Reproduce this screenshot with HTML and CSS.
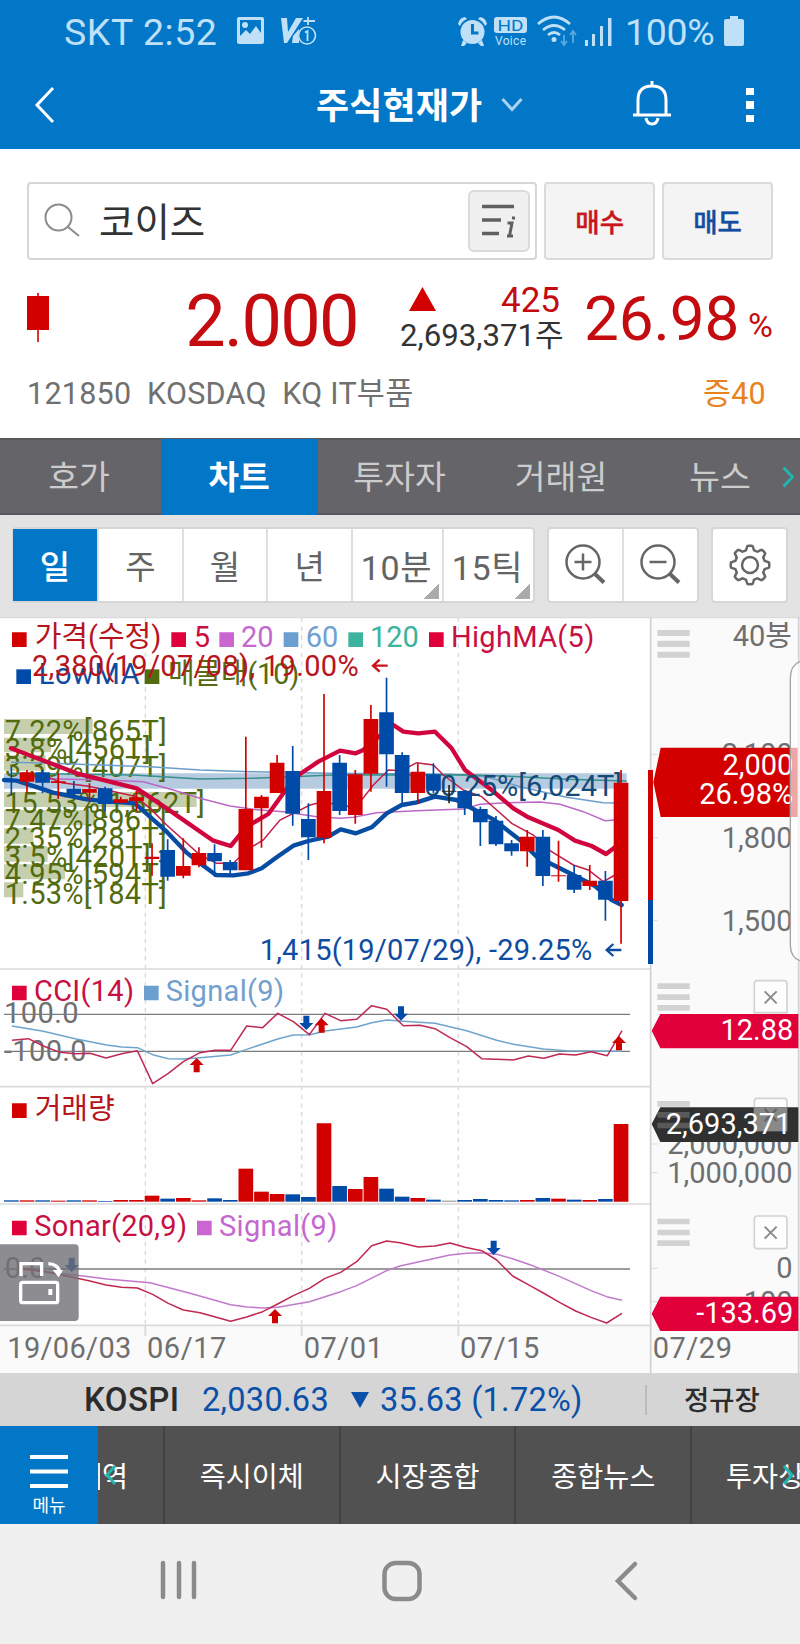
FILE: index.html
```html
<!DOCTYPE html>
<html lang="ko">
<head>
<meta charset="utf-8">
<title>주식현재가</title>
<link rel="stylesheet" href="styles.css">
</head>
<body>
<div class="status">
  <span class="carrier">SKT 2:52</span>
  <svg class="st-left" width="80" height="32" viewBox="0 0 80 32">
    <path fill-rule="evenodd" d="M3 2h23q2 0 2 2v23q0 2-2 2H3q-2 0-2-2V4q0-2 2-2zm1 3v16l6-6 4 4 6-8 5 7V5zM9 7a3 3 0 1 1 0 6 3 3 0 0 1 0-6z"/>
    <path d="M45 3h6l1 14 8-14h7L51 28h-3z"/><path d="M57 21l6-7v14h-7z"/>
    <circle cx="71" cy="20.500" r="8.500" fill="#0277c8" stroke="#bfe0f7" stroke-width="1.600"/>
    <path d="M69 17.500l2.500-1.500v10M72 2v8M67.500 6H79" fill="none" stroke="#bfe0f7" stroke-width="1.800"/>
  </svg>
  <svg class="st-right" width="158" height="32" viewBox="0 0 158 32">
    <circle cx="15.500" cy="17" r="12"/><path d="M1 9q1-6 7-7l2 2q-5 2-7 7zM30 9q-1-6-7-7l-2 2q5 2 7 7zM6 25l4 3-3 3H4zM25 25l-4 3 3 3h3z"/>
    <path d="M15.500 9v9h6" fill="none" stroke="#0277c8" stroke-width="3"/>
    <rect x="37" y="2" width="33" height="16" rx="3"/>
    <text x="40.500" y="15.500" font-size="15" fill="#0277c8" textLength="26" lengthAdjust="spacingAndGlyphs">HD</text>
    <text x="38" y="29.500" font-size="12" textLength="31">Voice</text>
    <g fill="none" stroke="#bfe0f7" stroke-width="2.800"><path d="M81 9q16-14 32 0M86 15q11-9 22 0M91 20q6-5 12 0"/></g>
    <circle cx="97" cy="24.500" r="2.500"/>
    <path d="M107 20v9m-3-3 3 4 3-4M116 28V17m-3 3 3-4 3 4" fill="none" stroke="#5ba9df" stroke-width="1.800"/>
    <path d="M128 25h3v6h-3zM135 19h3v12h-3zM143 11h3v20h-3zM151 3h3.500v28H151z"/>
  </svg>
  <span class="pct">100%</span>
  <svg width="20" height="32" viewBox="0 0 20 32"><path d="M6 1h8v3h4q2 0 2 2v23q0 2-2 2H2q-2 0-2-2V6q0-2 2-2h4z"/></svg>
</div>
<header class="bar">
  <svg class="back" width="22" height="38" viewBox="0 0 22 38"><path d="M19 2 3 19l16 17"/></svg>
  <h1>주식현재가</h1>
  <svg class="drop" width="22" height="16" viewBox="0 0 22 16"><path d="M1.500 2 11 12.500 20.500 2"/></svg>
  <svg class="bell" width="40" height="46" viewBox="0 0 40 46"><path d="M20 1v5M1 35h38M6 35V20Q6 6 20 6t14 14v15M14 38q1 6 6 6t6-6"/></svg>
  <div class="dots"><i></i><i></i><i></i></div>
</header>
<section class="quote">
  <div class="search-row">
    <div class="search">
      <svg width="36" height="36" viewBox="0 0 36 36"><circle cx="14.500" cy="14.500" r="13"/><path d="m24 24 11 9"/></svg>
      <span class="name">코이즈</span>
      <div class="list-btn"><svg width="36" height="34" viewBox="0 0 36 34"><path d="M1 2.500h32M1 16h19M1 29.500h17" stroke="#606060" stroke-width="3.500"/><path d="M26.500 19H31l-2.500 13M26 32h6M32.700 12.500l-.4 3" fill="none" stroke="#606060" stroke-width="3"/></svg></div>
    </div>
    <div class="trade buy">매수</div>
    <div class="trade sell">매도</div>
  </div>
  <div class="price-row">
    <svg class="mini" width="22" height="50" viewBox="0 0 22 50"><path d="M0 3h22v34H0zM10.200 0h1.600v49h-1.600z" fill="#d30000"/></svg>
    <span class="price">2.000</span>
    <div class="change"><div class="chg-top"><svg width="27" height="24" viewBox="0 0 27 24"><path d="M13.500 0 27 24H0z" fill="#d30000"/></svg><span>425</span></div><div class="vol">2,693,371주</div></div>
    <span class="rate">26.98</span><span class="unit">%</span>
  </div>
  <div class="meta"><span>121850&nbsp; KOSDAQ&nbsp; KQ IT부품</span><span class="margin">증40</span></div>
</section>
<nav class="tabs">
  <span>호가</span><span class="on">차트</span><span>투자자</span><span>거래원</span><span>뉴스</span>
  <svg class="more" width="12" height="22" viewBox="0 0 12 22"><path d="m1.500 1.500 9 9.500-9 9.500"/></svg>
</nav>
<div class="tools">
  <div class="group periods"><b class="on">일</b><b>주</b><b>월</b><b>년</b><b class="wide">10분</b><b class="wide last">15틱</b></div>
  <div class="group zooms">
    <b><svg width="42" height="42" viewBox="0 0 42 42"><circle cx="18" cy="18" r="16.500"/><path d="M9.500 18h17M18 9.500v17"/><path d="m30 30 9 8.500" stroke-width="4"/></svg></b>
    <b><svg width="42" height="42" viewBox="0 0 42 42"><circle cx="18" cy="18" r="16.500"/><path d="M9.500 18h17"/><path d="m30 30 9 8.500" stroke-width="4"/></svg></b>
  </div>
  <div class="group gear"><b><svg width="42" height="42" viewBox="0 0 42 42"><circle cx="21" cy="21" r="8"/><path id="cog"/></svg></b></div>
</div>
<svg class="chart" width="800" height="756" viewBox="0 21 2400 2268">
  <rect y="21" width="2400" height="2268" fill="#fefefe"/>
  <path fill="#fafafa" d="M1952 21h448v2268h-448zM0 2146h2400v143H0z"/>
  <g fill="none" stroke="#dadada" stroke-width="5"><path d="M0 22h2400M0 1077h1950M0 1430h1950M0 1782h1950M0 2146h1950"/><path stroke="#d0d0d0" d="M1952 22v2267M2396 22v2267"/>
  <path d="M436 2146v31M905 2146v31M1375 2146v31" stroke-width="6"/>
  <path d="M1955 433h18M1955 683h18M1955 931h18M1955 1602h18M1955 1688h18M1955 1975h18M1955 2075h18" stroke-width="3"/>
  <path d="M436 24v2120M905 24v2120M1375 24v2120" stroke-width="4" stroke-dasharray="13 13"/></g>

  <path fill="#c6cfad" d="M12 327h266v45H12zM12 383h141v44H12zM12 436h125v46H12zM12 546h578v45H12zM12 600h273v46H12zM12 655h88v46H12zM12 709h131v46H12zM12 763h183v45H12zM12 817h58v45H12z"/>
  <path fill="#b6cbdf" d="M12 490h1868v46H12z"/>
  <g fill="#526b0e" font-size="87">
    <text x="14" y="392" textLength="486">7.22%[865T]</text><text x="14" y="447" textLength="438">3.8%[456T]</text><text x="14" y="500" textLength="486">3.39%[407T]</text><text x="14" y="609" textLength="600">15.53%[1,862T]</text><text x="14" y="660" textLength="486">7.47%[896T]</text><text x="14" y="714" textLength="486">2.35%[281T]</text><text x="14" y="770" textLength="438">3.5%[420T]</text><text x="14" y="823" textLength="486">4.95%[594T]</text><text x="14" y="881" textLength="486">1.53%[184T]</text>
  </g>
  <g class="thin">
    <path stroke="#6a9fcb" d="M33 457 150 460 300 465 450 470 600 480 750 485 990 490 1350 493 1460 500 1560 530 1700 562 1810 578 1845 579"/>
    <path stroke="#36908e" d="M33 490 400 495 600 507 750 505 1000 495 1400 494 1560 500 1700 508 1880 513"/>
    <path stroke="#bb68c6" d="M60 505 320 510 430 515 520 540 600 565 690 588 760 598 850 605 950 620 1020 625 1060 622 1130 608 1250 602 1390 597 1440 583 1520 578 1620 576 1680 583 1750 605 1815 632 1845 630"/>
    <path stroke="#c31e48" d="M60 500H140L185 518 260 528 320 540 410 560 460 605 500 645 550 690 600 735 650 760H700L740 720 790 690 840 630 880 610 930 585 970 575 1040 590 1085 570 1120 525 1165 480 1205 482 1250 458 1300 465 1330 495 1390 540 1445 560 1490 600 1535 640 1600 675 1650 722 1720 765 1765 780 1810 815 1845 795"/>
  </g>
  <g class="thick">
    <path stroke="#d1053e" d="M33 415 100 440 230 490 410 535 500 595 640 692 692 708 740 650 805 612 857 540 900 492 955 455 1020 422 1067 430 1090 420 1130 385 1180 345 1210 365 1255 370 1305 365 1355 415 1395 480 1475 540 1540 595 1585 622 1675 660 1725 692 1775 708 1818 732 1845 712"/>
    <path stroke="#074ca3" d="M12 510 50 512 160 548 260 568 330 575 405 580 500 665 560 728 600 760 648 795 700 796 745 790 785 775 830 742 880 707 925 693 985 680 1022 658 1068 670 1115 652 1160 610 1205 585 1250 577 1305 560 1370 570 1425 600 1480 628 1560 690 1610 740 1660 765 1720 795 1785 828 1835 870 1865 885"/>
  </g>
  <text x="1272" y="557" fill="#144a78" textLength="594">50.25%[6,024T]</text>
  <g id="candles"></g>

  <path fill="#d30000" d="M36 67h44v44H36zM36 1480h44v44H36z"/><path fill="#e0003c" d="M514 67h44v44h-44zM1287 67h44v44h-44zM36 1127h44v44H36zM36 1832h44v44H36z"/>
  <path fill="#c966d2" d="M658 67h44v44h-44zM591 1832h44v44h-44z"/><path fill="#6a9fd0" d="M851 67h44v44h-44zM432 1127h44v44h-44z"/><path fill="#3cb39c" d="M1045 67h44v44h-44z"/><path fill="#004aa8" d="M49 178h44v44H49z"/><path fill="#526b0e" d="M434 178h44v44h-44z"/>
  <text x="104" y="112" fill="#b8141c" textLength="380">가격(수정)</text><text x="581" y="112" fill="#c80f41">5</text><text x="723" y="112" fill="#c468cf">20</text><text x="917" y="112" fill="#719fce">60</text><text x="1110" y="112" fill="#3cb39c">120</text><text x="1353" y="112" fill="#c80f41" textLength="430">HighMA(5)</text>
  <text x="116" y="223" fill="#0d4ca0" textLength="303">LowMA</text><text x="504" y="223" fill="#556b12" textLength="394">매물대(10)</text>
  <text x="96" y="197" fill="#b8141c" textLength="980">2,380(19/07/08), 19.00%</text>
  <path d="M1163 167h-44m20-18-20 18 20 18" fill="none" stroke="#c8141c" stroke-width="7"/>
  <text x="779" y="1050" fill="#0d4ca0" textLength="998">1,415(19/07/29), -29.25%</text>
  <path d="M1864 1020h-44m20-18-20 18 20 18" fill="none" stroke="#0d4ca0" stroke-width="7"/>

  <text x="102" y="1172" fill="#c80f41" textLength="300">CCI(14)</text><text x="497" y="1172" fill="#719fce" textLength="355">Signal(9)</text>
  <text x="104" y="1527" fill="#b8141c" textLength="240">거래량</text>
  <text x="103" y="1878" fill="#c80f41" textLength="458">Sonar(20,9)</text><text x="657" y="1878" fill="#c468cf" textLength="355">Signal(9)</text>
  <g class="grey"><text x="12" y="1240" textLength="224">100.0</text><text x="12" y="1354" textLength="248">-100.0</text><text x="14" y="2005" textLength="122">0.0</text></g>
  <path d="M12 1213h1878M12 1324h1878M12 1977h1878" stroke="#7c7c7c" stroke-width="4"/>
  <g class="thin" transform="translate(0 1050)" stroke-linejoin="round">
    <path stroke="#6fa5cc" d="M36 198 130 214 225 236 320 255 365 261 412 263 458 284 505 296 550 297 600 293 692 285 740 268 833 237 880 225 930 224 975 213 1070 201 1115 188 1160 180 1210 184 1305 190 1400 212 1490 241 1540 253 1630 267 1700 272 1866 274"/>
    <path stroke="#bf2a54" d="M36 241 85 236 130 258 180 277 225 281 270 280 318 294 365 281 412 272 458 371 505 340 550 305 600 278 645 271 692 271 740 198 788 203 833 160 880 185 928 224 975 160 1022 182 1070 178 1115 137 1160 148 1210 197 1260 196 1305 206 1350 233 1400 260 1445 296 1540 300 1585 288 1632 295 1678 282 1727 285 1773 275 1822 287 1866 212"/>
    <path stroke="#c07acb" d="M60 928 225 945 320 957 450 968 570 1000 692 1034 740 1041 788 1044 833 1042 928 1025 1022 995 1070 977 1160 932 1200 918 1350 885 1400 880 1445 878 1490 883 1540 897 1590 914 1680 950 1773 992 1820 1010 1866 1021"/>
    <path stroke="#c0284f" d="M60 925 130 934 225 953 270 963 318 975 365 982 412 984 458 1003 505 1030 550 1050 600 1058 692 1084 740 1071 788 1055 833 1032 880 1007 928 985 975 955 1022 937 1070 905 1115 857 1160 843 1200 848 1255 861 1305 858 1350 849 1395 862 1445 872 1490 900 1538 948 1590 977 1630 999 1680 1028 1727 1053 1773 1072 1820 1089 1866 1060"/>
  </g>
  <g id="volume"></g>
  <g fill="#cf0000"><path d="M590 1344l21 21h-12v22h-18v-22h-12z"/><path d="M965 1225l21 21h-12v22h-18v-22h-12z"/><path d="M1857 1278l21 21h-12v22h-18v-22h-12z"/><path d="M825 2097l21 21h-12v22h-18v-22h-12z"/></g>
  <g fill="#004aa8"><path d="M919 1260l21-21h-12v-22h-18v22h-12z"/><path d="M1203 1232l21-21h-12v-22h-18v22h-12z"/><path d="M215 1986l21-21h-12v-22h-18v22h-12z"/><path d="M1481 1935l21-21h-12v-22h-18v22h-12z"/></g>

  <g class="grey"><text x="22" y="2243" textLength="372">19/06/03</text><text x="441" y="2243" textLength="238">06/17</text><text x="911" y="2243" textLength="238">07/01</text><text x="1380" y="2243" textLength="238">07/15</text><text x="1958" y="2243" textLength="238">07/29</text></g>
  <g class="grey end"><text x="2376" y="108">40봉</text><text x="2378" y="463">2,100</text><text x="2378" y="713">1,800</text><text x="2378" y="962">1,500</text><text x="2378" y="1632">2,000,000</text><text x="2378" y="1718">1,000,000</text><text x="2378" y="2005">0</text><text x="2378" y="2105">-100</text></g>
  <path fill="#d30000" d="M1944 480h15v390h-15zM1960 517l22-104h411v208h-411z"/><path fill="#0048a8" d="M1944 870h15v192h-15z"/>
  <path fill="#e2003b" d="M1955 1262l26-50h414v103h-414zM1955 2111l26-51h414v103h-414z"/><path fill="#303030" d="M1955 1542l26-50h414v104h-414z"/>
  <g fill="#d2d2d2"><path d="M1972 60h97v18h-97zM1972 92h97v19h-97zM1972 125h97v18h-97zM1972 1120h97v17h-97zM1972 1153h97v17h-97zM1972 1185h97v17h-97zM1972 1826h97v17h-97zM1972 1859h97v17h-97zM1972 1891h97v17h-97z"/>
  <path d="M1972 1473h97v17h-97z"/><path opacity=".25" d="M1972 1506h97v17h-97zM1972 1538h97v17h-97z"/></g>
  <g stroke="#d2d2d2" stroke-width="5" fill="#fdfdfd"><path d="M2263 1208v-87q0-9 9-9h80q9 0 9 9v87z"/><rect x="2263" y="1818" width="98" height="98" rx="9"/><path d="M2263 1491v-17q0-9 9-9h80q9 0 9 9v17"/></g>
  <rect x="2261" y="1492" width="101" height="72" fill="#a0a0a0" opacity=".8"/>
  <g stroke="#8a8a8a" stroke-width="6"><path d="M2294 1144l36 36m0-36-36 36M2294 1850l36 36m0-36-36 36"/><path stroke="#626262" d="M2294 1497l36 36m0-36-36 36"/></g>
  <g fill="#fff" class="end"><text x="2380" y="496">2,000</text><text x="2380" y="582">26.98%</text><text x="2380" y="1291">12.88</text><text x="2374" y="1572">2,693,371</text><text x="2380" y="2138">-133.69</text></g>
  <path d="M2400 155q-29 10-29 50v800q0 37 29 47" fill="#fff" fill-opacity=".65" stroke="#a3a3a3" stroke-width="4"/>

  <g transform="translate(0 1050)"><path d="M0 853h224q12 0 12 12v206q0 12-12 12H0z" fill="#717176" fill-opacity=".8"/>
  <path d="M63 948v-37h62v37M145 911q31 2 35 28" fill="none" stroke="#fff" stroke-width="10"/><path d="M158 930h31l-13 22z" fill="#fff"/>
  <rect x="62" y="967" width="111" height="61" rx="6" fill="none" stroke="#fff" stroke-width="10"/><path d="M145 987h12v18h-12z" fill="#fff"/></g>
</svg>
<div class="index">
  <span class="kospi">KOSPI</span><span class="ival">2,030.63</span>
  <svg width="18" height="16" viewBox="0 0 18 16"><path d="M0 0h18L9 16z" fill="#0a4fa8"/></svg>
  <span class="idiff">35.63 (1.72%)</span><span class="session">정규장</span>
</div>
<div class="quick">
  <div class="menu"><svg width="38" height="36" viewBox="0 0 38 36"><path d="M0 3h38M0 17.500h38M0 32h38"/></svg><span>메뉴</span></div>
  <div class="item first">역<svg width="12" height="20" viewBox="0 0 12 20"><path d="M10 1 2 10l8 9"/></svg></div>
  <div class="item">즉시이체</div><div class="item">시장종합</div><div class="item">종합뉴스</div>
  <div class="item final">투자상<svg width="12" height="20" viewBox="0 0 12 20"><path d="m2 1 8 9-8 9"/></svg></div>
</div>
<div class="android">
  <svg width="38" height="40" viewBox="0 0 38 40"><path d="M3 3v34M19 3v34M34 3v34"/></svg>
  <svg width="42" height="42" viewBox="0 0 42 42"><rect x="3.500" y="3" width="35" height="36" rx="11"/></svg>
  <svg width="26" height="42" viewBox="0 0 26 42"><path d="M22 4 5 21l17 17"/></svg>
</div>
<script src="chart.js"></script>
</body>
</html>
```
FILE: styles.css
```css
* { box-sizing: border-box; }
body { margin: 0; width: 800px; background: #fff; font-family: Roboto, "Noto Sans CJK KR", sans-serif; overflow-x: hidden; }
svg { display: block; flex: none; }
.status { height: 62px; background: #0277c8; color: #bfe0f7; fill: #bfe0f7; display: flex; align-items: center; padding-left: 64px; font-size: 37.5px; }
.status svg { overflow: visible; }
.carrier { width: 172px; white-space: pre; line-height: 62px; padding-top: 2px; letter-spacing: .55px; }
.st-left { width: 80px; }
.st-right { margin-left: 141px; }
.pct { width: 98px; padding: 2px 0 0 10px; letter-spacing: -.3px; }
.status .pct + svg { margin-left: 11px; }
.bar { height: 87px; background: #0277c8; display: flex; align-items: flex-start; padding-left: 34px; }
.bar svg { fill: none; stroke: #fff; stroke-width: 3; }
.back { margin-top: 24px; }
.bar h1 { margin: 22px 0 0 260px; width: 170px; font-size: 36px; font-weight: 700; line-height: 46px; color: #fff; letter-spacing: .1px; white-space: nowrap; }
.bar .drop { margin: 35px 0 0 15px; stroke: #a9d3f1; }
.bar .bell { margin: 18px 0 0 109px; }
.dots { margin: 26px 0 0 74px; display: grid; gap: 6px; }
.dots i { width: 8px; height: 7.300px; background: #fff; }
.quote { height: 289px; padding: 33px 27px 0; }
.search-row { display: flex; gap: 7px; height: 78px; }
.search { width: 511px; border: 2px solid #d6d6d6; border-radius: 4px; display: flex; align-items: center; padding: 0 5px 0 15px; background: #fff; }
.search > svg { fill: none; stroke: #8b8b8b; stroke-width: 2; }
.name { flex: 1; padding: 3px 0 0 19px; font-size: 38.500px; color: #333; line-height: 50px; }
.list-btn { width: 62px; height: 62px; border: 2px solid #dadada; border-radius: 6px; background: #f0f0f0; display: grid; place-items: center; }
.trade { width: 111px; border: 2px solid #dadada; border-radius: 4px; background: #f4f4f5; display: grid; place-items: center; font-size: 26.500px; font-weight: 500; padding-bottom: 2px; -webkit-text-stroke: .4px; }
.buy { color: #c8161d; }
.sell { color: #134d9f; }
.price-row { height: 116px; display: flex; align-items: flex-start; color: #c40b10; }
.mini { margin-top: 33px; }
.price { width: 309px; text-align: right; margin-top: 26px; font-size: 72px; line-height: 72px; letter-spacing: -1.6px; }
.change { margin: 23px 0 0 42px; width: 166px; }
.chg-top { display: flex; justify-content: space-between; padding: 0 6px 0 9px; font-size: 35px; line-height: 36px; }
.chg-top svg { margin-top: 4px; }
.vol { font-size: 31.200px; line-height: 34px; color: #333; white-space: nowrap; }
.rate { margin: 28px 0 0 18px; width: 157px; font-size: 62px; line-height: 62px; letter-spacing: -.1px; }
.unit { margin: 49px 0 0 7px; font-size: 34px; line-height: 33px; }
.meta { display: flex; justify-content: space-between; font-size: 30.500px; line-height: 36px; color: #707070; padding-right: 7px; white-space: nowrap; letter-spacing: .25px; }
.margin { color: #e8821e; }
.tabs { height: 77px; background: #656469; border-top: 2px solid #5a595e; border-bottom: 2px solid #57565b; display: flex; color: #ccc; font-size: 33.500px; line-height: 75px; }
.tabs span { width: 161px; text-align: center; padding-right: 3px; white-space: nowrap; }
.tabs .on { width: 157px; padding-left: 2px; background: #0277c8; color: #fff; font-weight: 700; margin-top: -1px; height: 76px; line-height: 77px; }
.tabs span:nth-child(3) { padding: 0 3px 0 0; width: 166px; }
.tabs span:nth-child(4) { padding: 0; width: 154px; }
.tabs span:nth-child(5) { padding: 0; width: 164px; }
.more { margin: 26px 0 0 -20px; fill: none; stroke: #22b5b0; stroke-width: 3; }
.tools { height: 102px; background: #e3e3e3; display: flex; align-items: flex-start; padding: 12px 0 0 12px; }
.group { display: flex; height: 76px; border: 2px solid #d6d6d6; border-radius: 4px; background: #fff; }
.group b { flex: 1; display: grid; place-items: center; font-weight: 400; font-size: 33px; line-height: 60px; color: #646464; border-left: 2px solid #dfdfdf; }
.group svg { fill: none; stroke: #666; stroke-width: 2.500; }
.group b:first-child { border-left: 0; }
.periods { width: 523px; margin-right: 12px; }
.periods b { padding-top: 5px; }
.periods .on { flex: none; width: 84px; margin-left: -1px; background: #0277c8; color: #fff; font-weight: 500; }
.periods .wide { flex: none; width: 91px; padding-right: 2px; font-size: 34px; letter-spacing: .6px; background: linear-gradient(135deg, transparent 50%, #aaa 51%) right 3px bottom 2px / 16px 16px no-repeat; }
.zooms { width: 152px; margin-right: 12px; }
.gear { width: 77px; }
.chart { font-size: 87px; }
.chart .grey { fill: #6f6f6f; }
.chart .end { text-anchor: end; }
.thin { fill: none; stroke-width: 4.500; }
.thick { fill: none; stroke-width: 13; stroke-linejoin: round; stroke-linecap: round; }
.index { height: 53px; background: #d5d5d5; display: flex; align-items: center; padding-left: 84px; font-size: 32.500px; color: #0a4fa8; white-space: nowrap; }
.kospi { width: 118px; font-weight: 500; color: #2c2c2c; font-size: 33px; letter-spacing: .4px; }
.ival { width: 149px; letter-spacing: .3px; }
.idiff { margin-left: 11px; width: 265px; letter-spacing: .25px; }
.session { border-left: 2px solid #bbb; padding: 2px 0 0 37px; font-size: 27.500px; line-height: 28px; font-weight: 500; color: #2c2c2c; }
.quick { height: 98px; background: #515151; display: flex; color: #fff; font-size: 28.300px; overflow: hidden; }
.menu { width: 98px; flex: none; background: #0277c8; display: flex; flex-direction: column; align-items: center; padding-top: 28px; font-size: 18px; line-height: 22px; gap: 5px; z-index: 1; }
.menu svg { stroke: #fff; stroke-width: 4; }
.item { width: 175.700px; flex: none; border-right: 2px solid #424242; text-align: center; line-height: 103px; position: relative; white-space: nowrap; }
.item svg { position: absolute; top: 39px; fill: none; stroke: #22b5b0; stroke-width: 3; }
.first { width: 67px; padding-right: 35px; border-left: 2px solid #eee; border-image: linear-gradient(transparent 38%, #eee 38%, #eee 65%, transparent 65%) 1; border-right: 0; box-shadow: inset -2px 0 #424242; }
.first svg { left: 5px; }
.final { text-align: left; padding-left: 34px; width: 140px; border: 0; }
.final svg { left: 90px; }
.android { height: 120px; background: #f0f0f0; display: flex; align-items: flex-start; padding: 36px 0 0 160px; fill: none; stroke: #8b8b8b; stroke-width: 4.500; stroke-linecap: round; }
.android svg:nth-child(2) { margin-left: 183px; }
.android svg:nth-child(3) { margin-left: 190px; }
```
FILE: chart.js
```js
// colour, body top, body bottom, wick top, wick bottom
const candles = [
  ['b',508,514,470,555],['r',487,515,480,548],['b',487,518,480,550],['r',514,519,490,567],['b',536,552,513,560],
  ['r',537,548,520,573],['b',535,582,530,605],['r',568,578,560,580],['r',562,573,543,603],['r',740,747,700,797],
  ['b',720,800,688,812],['r',768,797,685,805],['r',729,766,712,772],['b',729,754,703,800],['b',756,781,750,795],
  ['r',597,781,380,781],['r',560,595,555,713],['r',458,549,435,549],['b',483,611,408,647],['b',627,682,580,750],
  ['r',543,683,252,700],['b',458,603,435,615],['r',493,615,480,641],['r',327,491,285,545],['b',307,433,203,530],
  ['b',435,549,427,585],['r',485,549,460,582],['b',493,542,460,550],['k',542,545,525,580],['b',543,595,540,615],
  ['b',597,637,590,708],['b',632,703,618,708],['b',700,724,690,737],['r',680,724,660,770],['b',680,798,660,828],
  ['r',796,799,692,815],['b',795,839,765,849],['r',812,828,765,840],['b',812,869,783,932],['r',518,873,480,1001]
];
const tops = [721,721,721,722,721,721,723,720,720,707,716,714,721,715,720,626,695,702,703,711,490,678,687,651,686,710,714,719,722,720,717,720,721,720,714,716,719,720,717,492];
const colours = { r: '#d30000', b: '#004aa8', k: '#222' };
let c = '', v = '';
candles.forEach(([k, t, b, wt, wb], i) => {
  const x = 12 + i * 46.9;
  c += `<path fill="${colours[k]}" d="M${x} ${t}h44v${b - t}h-44zM${x + 19.5} ${wt}h5v${wb - wt}h-5z"/>`;
  v += `<path fill="${k === 'k' ? '#888' : colours[k]}" d="M${x} ${tops[i] + 1050}h44v${725 - tops[i]}h-44z"/>`;
});
document.getElementById('candles').innerHTML = c;
document.getElementById('volume').innerHTML = v;

// Eight-toothed gear outline
let d = '';
for (let i = 0; i < 96; i++) {
  const a = i / 96 * Math.PI * 2;
  const r = 17.2 + 2.1 * Math.tanh(3 * Math.cos(8 * a));
  d += (i ? 'L' : 'M') + (21 + r * Math.cos(a)).toFixed(2) + ' ' + (21 + r * Math.sin(a)).toFixed(2);
}
document.getElementById('cog').setAttribute('d', d + 'z');
```
